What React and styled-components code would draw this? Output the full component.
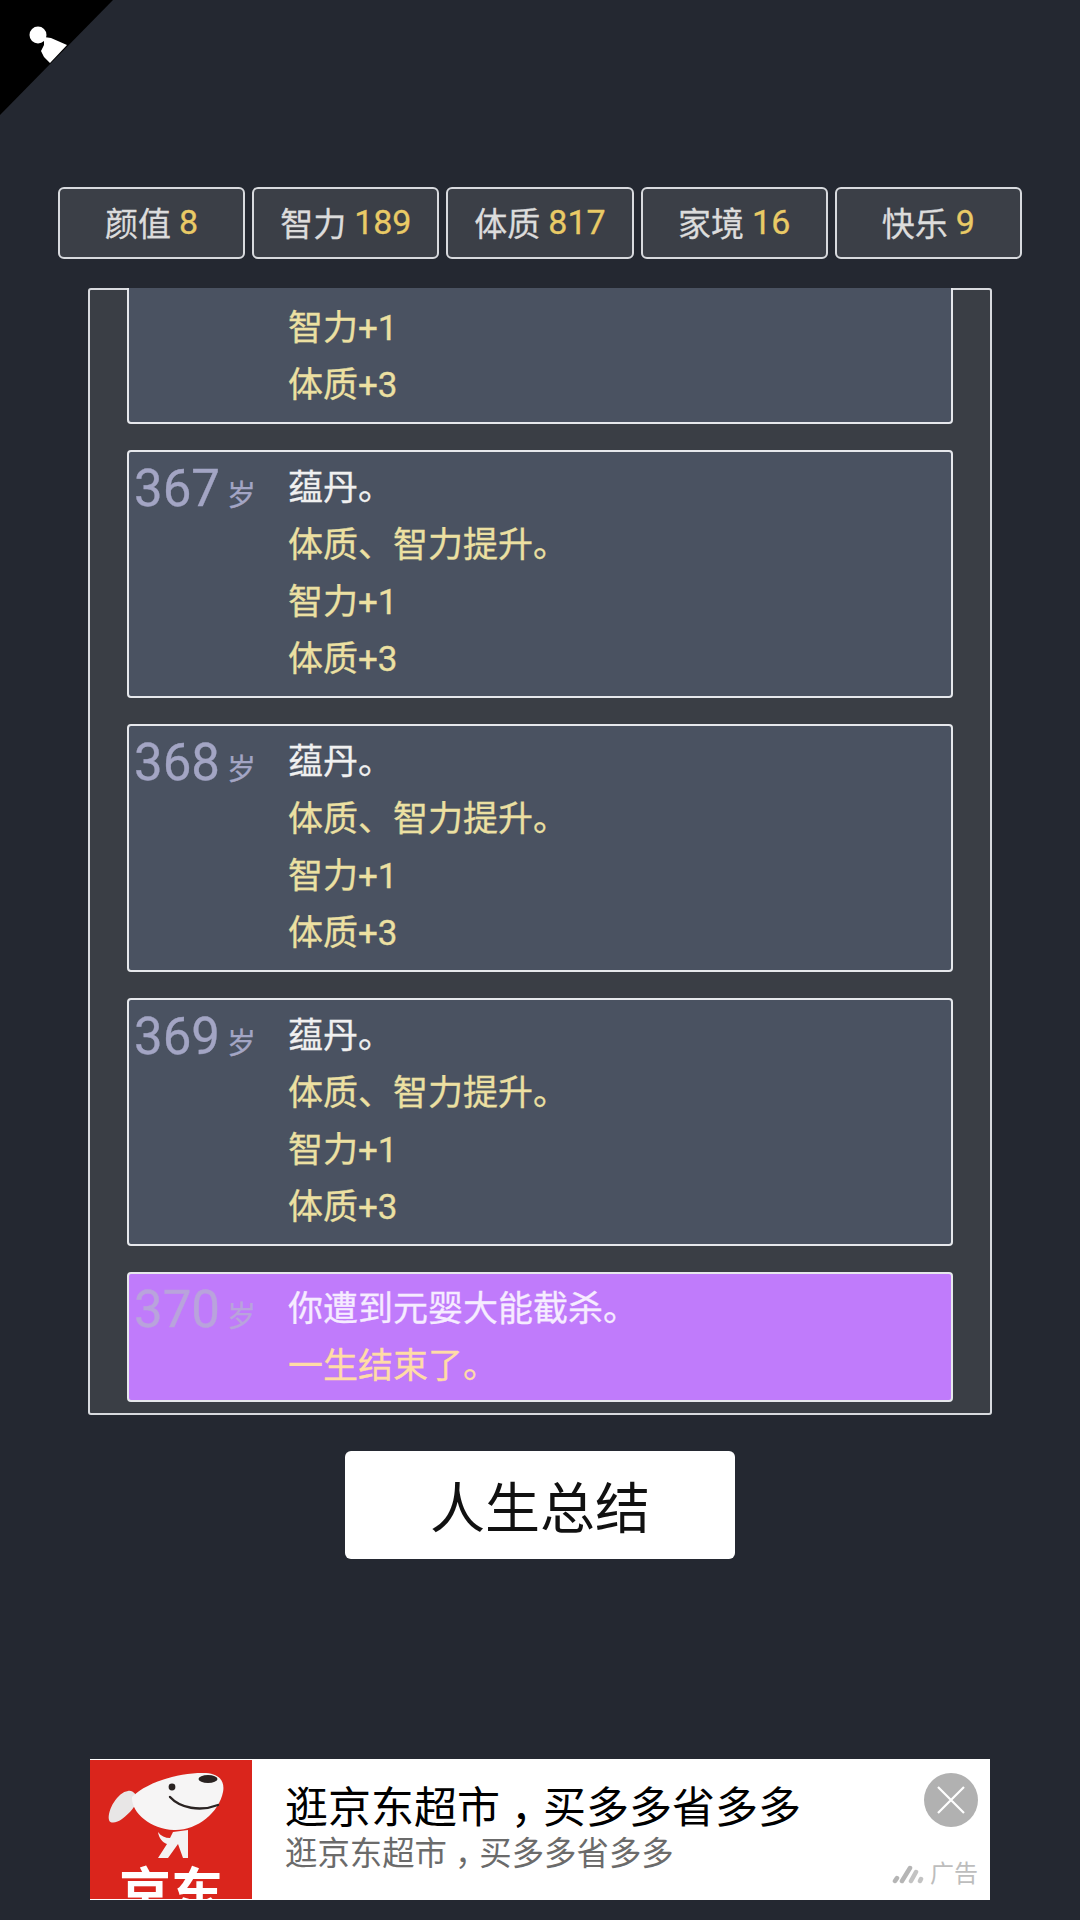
import React from 'react';
import styled, { createGlobalStyle } from 'styled-components';

const GlobalStyle = createGlobalStyle`
  html, body {
    margin: 0;
    padding: 0;
    background: #242831;
  }
  * {
    box-sizing: border-box;
  }
`;

const Page = styled.div`
  position: relative;
  width: 1080px;
  height: 1920px;
  padding-top: 187px;
  overflow: hidden;
  background: #242831;
  font-family: Roboto, "Noto Sans CJK SC", sans-serif;
`;

const Corner = styled.svg`
  position: absolute;
  top: 0;
  left: 0;
`;

const StatRow = styled.div`
  display: flex;
  gap: 7px;
  margin: 0 58px;
`;

const Stat = styled.div`
  flex: 1;
  height: 72px;
  padding-bottom: 2px;
  display: flex;
  align-items: center;
  justify-content: center;
  gap: 8px;
  border: 2px solid #d8dade;
  border-radius: 6px;
  background: #3b3f47;
  color: #dcdcdc;
  font-size: 33px;
  -webkit-text-stroke: 0.3px;
`;

const StatValue = styled.span`
  color: #e9ca66;
  font-size: 34px;
`;

const Panel = styled.div`
  width: 904px;
  height: 1127px;
  margin: 29px 0 0 88px;
  padding: 0 39px 13px;
  display: flex;
  flex-direction: column;
  justify-content: flex-end;
  gap: 26px;
  overflow: hidden;
  border-radius: 3px;
  background: #3a3e45;
  box-shadow: inset 0 0 0 2px #d8dade;
`;

const Entry = styled.div`
  flex-shrink: 0;
  display: flex;
  padding: ${(p) => (p.$final ? '7px 5px 5px' : '8px 5px 8px')};
  border: 2px solid #e6e8ec;
  border-radius: 4px;
  background: ${(p) => (p.$final ? '#c07bfb' : '#4a5261')};
`;

const Age = styled.div`
  flex: 0 0 154px;
  height: 57px;
  display: flex;
  align-items: baseline;
  gap: 7px;
  line-height: 57px;
  -webkit-text-stroke: 0.3px;
  color: ${(p) => (p.$final ? '#b9a3dc' : '#a3a5c4')};
`;

const AgeNumber = styled.span`
  font-size: 51px;
`;

const AgeUnit = styled.span`
  font-size: 29px;
`;

const Lines = styled.div`
  display: flex;
  flex-direction: column;
`;

const Line = styled.div`
  height: 57px;
  line-height: 57px;
  font-size: 35px;
  -webkit-text-stroke: 0.3px;
  white-space: nowrap;
  color: ${(p) => p.$color};
`;

const SummaryButton = styled.div`
  width: 390px;
  height: 108px;
  margin: 36px auto 0;
  padding-bottom: 3px;
  display: flex;
  align-items: center;
  justify-content: center;
  border-radius: 6px;
  background: #fff;
  color: #111;
  font-size: 55px;
`;

const Ad = styled.div`
  display: flex;
  width: 900px;
  height: 141px;
  margin: 200px 0 0 90px;
  background: #fff;
`;

const AdLogo = styled.div`
  flex: 0 0 162px;
  height: 139px;
  margin-top: 1px;
  display: flex;
  flex-direction: column;
  align-items: center;
  overflow: hidden;
  background: #da251c;
`;

const AdLogoText = styled.div`
  flex-shrink: 0;
  margin-top: -1px;
  color: #fff;
  font-size: 52px;
  font-weight: 700;
  line-height: 62px;
`;

const AdBody = styled.div`
  flex: 1;
  padding: 23px 0 0 33px;
`;

const AdTitle = styled.div`
  color: #000;
  font-size: 43px;
  line-height: 53px;
  white-space: nowrap;
`;

const AdComma = styled.span`
  padding-left: 0.25em;
  margin-right: -0.25em;
`;

const AdSubtitle = styled.div`
  color: #6b6b6b;
  font-size: 32.4px;
  line-height: 38px;
  white-space: nowrap;
`;

const AdSide = styled.div`
  flex: 0 0 128px;
  padding: 14px 12px 0 0;
  display: flex;
  flex-direction: column;
  align-items: flex-end;
`;

const AdTag = styled.div`
  margin-top: 32px;
  display: flex;
  align-items: center;
  gap: 6px;
  color: #bdbdbd;
  font-size: 24px;
  line-height: 30px;
`;

const stats = [
  { label: '颜值', value: 8 },
  { label: '智力', value: 189 },
  { label: '体质', value: 817 },
  { label: '家境', value: 16 },
  { label: '快乐', value: 9 },
];

const WHITE = '#f0f0f0';
const YELLOW = '#ece0a2';

const ageLines = [
  { text: '蕴丹。', color: WHITE },
  { text: '体质、智力提升。', color: YELLOW },
  { text: '智力+1', color: YELLOW },
  { text: '体质+3', color: YELLOW },
];

const entries = [
  { age: 366, lines: ageLines },
  { age: 367, lines: ageLines },
  { age: 368, lines: ageLines },
  { age: 369, lines: ageLines },
  {
    age: 370,
    final: true,
    lines: [
      { text: '你遭到元婴大能截杀。', color: '#f6ecff' },
      { text: '一生结束了。', color: '#ffdca6' },
    ],
  },
];

const JdDog = () => (
  <svg width="162" height="104" viewBox="0 0 162 104" style={{ flexShrink: 0 }}>
    <path d="M38 31 C28 32 17 50 19 60 C20 64 27 63 32 59 C40 53 46 46 47 40 C47 35 43 30 38 31 Z" fill="#e8e6e6" />
    <path d="M42 37 C58 21 92 12 116 13 C130 14 135 22 133 32 C129 53 106 71 84 70 C60 69 41 52 42 37 Z" fill="#f6f5f5" />
    <ellipse cx="118" cy="19" rx="9.5" ry="4" fill="#2a2322" />
    <circle cx="82" cy="27" r="3.4" fill="#2a2322" />
    <path d="M80 37 C90 48 110 52 128 45" fill="none" stroke="#2a2322" strokeWidth="2.4" strokeLinecap="round" />
    <path d="M83 72 L98 70 L98 98 L93 98 L88 84 L78 98 L68 98 L77 84 C72 82 69 78 68 72 C71 76 75 78 80 78 Z" fill="#f4f2f2" />
  </svg>
);

const App = () => (
  <Page>
    <GlobalStyle />
    <Corner width="114" height="116" viewBox="0 0 114 116">
      <path d="M0 0 H113 L0 115 Z" fill="#000" />
      <circle cx="38" cy="35" r="8.5" fill="#fff" />
      <path d="M44 37 L51 38 L67 45 L50 63 L44 57 L41 51 L44 45 Z" fill="#fff" />
    </Corner>

    <StatRow>
      {stats.map((stat) => (
        <Stat key={stat.label}>
          {stat.label}
          <StatValue>{stat.value}</StatValue>
        </Stat>
      ))}
    </StatRow>

    <Panel>
      {entries.map((entry) => (
        <Entry key={entry.age} $final={entry.final}>
          <Age $final={entry.final}>
            <AgeNumber>{entry.age}</AgeNumber>
            <AgeUnit>岁</AgeUnit>
          </Age>
          <Lines>
            {entry.lines.map((line) => (
              <Line key={line.text} $color={line.color}>{line.text}</Line>
            ))}
          </Lines>
        </Entry>
      ))}
    </Panel>

    <SummaryButton>人生总结</SummaryButton>

    <Ad>
      <AdLogo>
        <JdDog />
        <AdLogoText>京东</AdLogoText>
      </AdLogo>
      <AdBody>
        <AdTitle>逛京东超市<AdComma>，</AdComma>买多多省多多</AdTitle>
        <AdSubtitle>逛京东超市<AdComma>，</AdComma>买多多省多多</AdSubtitle>
      </AdBody>
      <AdSide>
        <svg width="54" height="54" viewBox="0 0 54 54">
          <circle cx="27" cy="27" r="27" fill="#b1b1b1" />
          <path d="M14 14 L40 40 M40 14 L14 40" stroke="#fff" strokeWidth="2.2" />
        </svg>
        <AdTag>
          <svg width="32" height="20" viewBox="0 0 32 20">
            <g stroke="#b5b5b5" strokeWidth="4.5" strokeLinecap="round">
              <path d="M3 17 L5 14" />
              <path d="M10 17 L18 4" />
              <path d="M19 17 L24 8" opacity="0.8" />
              <path d="M28 17 L29 15" opacity="0.8" />
            </g>
          </svg>
          广告
        </AdTag>
      </AdSide>
    </Ad>
  </Page>
);

export default App;
